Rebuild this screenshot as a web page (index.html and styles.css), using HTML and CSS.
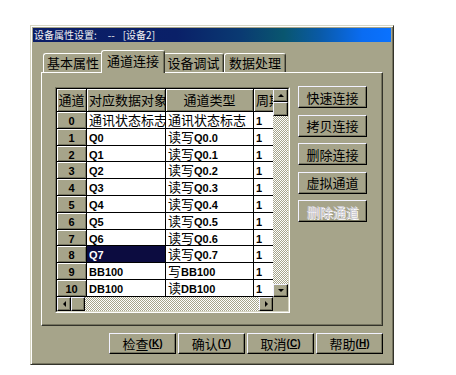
FILE: index.html
```html
<!DOCTYPE html>
<html>
<head>
<meta charset="utf-8">
<link rel="stylesheet" href="styles.css">
</head>
<body>
<div class="dialog">
  <div class="titlebar"><span>设备属性设置:</span><span class="t-dash">--</span><span class="t-dev">[设备2]</span></div>
  <div class="tabs">
    <div class="tab t1">基本属性</div>
    <div class="tab active">通道连接</div>
    <div class="tab t3">设备调试</div>
    <div class="tab t4">数据处理</div>
  </div>
  <div class="panel">
    <div class="grid">
      <div class="grid-inner">
        <div class="cells">
          <div class="c hd ctr">通道</div>
          <div class="c hd">对应数据对象</div>
          <div class="c hd ctr">通道类型</div>
          <div class="c hd">周期</div>

          <div class="c rh"><span class="en">0</span></div>
          <div class="c">通讯状态标志</div>
          <div class="c">通讯状态标志</div>
          <div class="c"><span class="en">1</span></div>

          <div class="c rh"><span class="en">1</span></div>
          <div class="c"><span class="en">Q0</span></div>
          <div class="c">读写<span class="en">Q0.0</span></div>
          <div class="c"><span class="en">1</span></div>

          <div class="c rh"><span class="en">2</span></div>
          <div class="c"><span class="en">Q1</span></div>
          <div class="c">读写<span class="en">Q0.1</span></div>
          <div class="c"><span class="en">1</span></div>

          <div class="c rh"><span class="en">3</span></div>
          <div class="c"><span class="en">Q2</span></div>
          <div class="c">读写<span class="en">Q0.2</span></div>
          <div class="c"><span class="en">1</span></div>

          <div class="c rh"><span class="en">4</span></div>
          <div class="c"><span class="en">Q3</span></div>
          <div class="c">读写<span class="en">Q0.3</span></div>
          <div class="c"><span class="en">1</span></div>

          <div class="c rh"><span class="en">5</span></div>
          <div class="c"><span class="en">Q4</span></div>
          <div class="c">读写<span class="en">Q0.4</span></div>
          <div class="c"><span class="en">1</span></div>

          <div class="c rh"><span class="en">6</span></div>
          <div class="c"><span class="en">Q5</span></div>
          <div class="c">读写<span class="en">Q0.5</span></div>
          <div class="c"><span class="en">1</span></div>

          <div class="c rh"><span class="en">7</span></div>
          <div class="c"><span class="en">Q6</span></div>
          <div class="c">读写<span class="en">Q0.6</span></div>
          <div class="c"><span class="en">1</span></div>

          <div class="c rh"><span class="en">8</span></div>
          <div class="c sel"><span class="en">Q7</span></div>
          <div class="c">读写<span class="en">Q0.7</span></div>
          <div class="c"><span class="en">1</span></div>

          <div class="c rh"><span class="en">9</span></div>
          <div class="c"><span class="en">BB100</span></div>
          <div class="c">写<span class="en">BB100</span></div>
          <div class="c"><span class="en">1</span></div>

          <div class="c rh"><span class="en">10</span></div>
          <div class="c"><span class="en">DB100</span></div>
          <div class="c">读<span class="en">DB100</span></div>
          <div class="c"><span class="en">1</span></div>
        </div>
        <div class="vscroll">
          <div class="sb-btn vbtn"><span class="arr up"></span></div>
          <div class="sb-btn vthumb"></div>
          <div class="track"></div>
          <div class="sb-btn vbtn"><span class="arr down"></span></div>
        </div>
        <div class="hscroll">
          <div class="sb-btn hbtn"><span class="arr left"></span></div>
          <div class="sb-btn hthumb"></div>
          <div class="track"></div>
          <div class="sb-btn hbtn"><span class="arr right"></span></div>
        </div>
        <div class="corner"></div>
      </div>
    </div>
    <div class="side">
      <div class="btn sbtn">快速连接</div>
      <div class="btn sbtn">拷贝连接</div>
      <div class="btn sbtn">删除连接</div>
      <div class="btn sbtn">虚拟通道</div>
      <div class="btn sbtn disabled">删除通道</div>
    </div>
  </div>
  <div class="footer">
    <div class="btn fbtn">检查<span class="en key">(<u>K</u>)</span></div>
    <div class="btn fbtn">确认<span class="en key">(<u>Y</u>)</span></div>
    <div class="btn fbtn">取消<span class="en key">(<u>C</u>)</span></div>
    <div class="btn fbtn">帮助<span class="en key">(<u>H</u>)</span></div>
  </div>
</div>
</body>
</html>
```

FILE: styles.css
```css
* { box-sizing: border-box; }

body {
  margin: 0;
  background: #fff;
  font-family: "Noto Sans CJK SC", sans-serif;
  font-size: 13px;
  color: #000;
}

.dialog {
  margin: 25px 0 0 30px;
  width: 364px;
  height: 340px;
  background: #a6a48a;
  border: 1px solid;
  border-color: #d6d5c2 #33332a #33332a #d6d5c2;
  box-shadow: inset 1px 1px #fff, inset -1px -1px #75745f;
  padding: 2px;
  display: flex;
  flex-direction: column;
}

.titlebar {
  height: 14px;
  line-height: 14px;
  font-size: 10px;
  color: #f2f2f2;
  padding-left: 1px;
  white-space: nowrap;
  background: linear-gradient(to right, #0b1d66 0%, #0a2068 40%, #0a3a72 58%, #09566f 70%, #0a5aa6 80%, #0a6cf2 92%, #0a72ff 100%);
}
.t-dash { margin-left: 11px; }
.t-dev { margin-left: 8px; }

.tabs {
  display: flex;
  align-items: flex-end;
  height: 30px;
  padding-left: 10px;
  position: relative;
  z-index: 2;
}

.tab {
  height: 19px;
  line-height: 17px;
  text-align: center;
  border: 1px solid;
  border-bottom: 0;
  border-color: #fff #33332a #33332a #fff;
  border-radius: 3px 3px 0 0;
  box-shadow: inset -1px 0 #75745f;
  background: #a6a48a;
  white-space: nowrap;
}
.t1 { width: 60px; }
.t3 { width: 61px; }
.t4 { width: 62px; }
.tab.active {
  width: 64px;
  height: 23px;
  line-height: 20px;
  margin: 0 -2px -1px;
  position: relative;
  z-index: 3;
}

.panel {
  margin-left: 8px;
  width: 342px;
  height: 254px;
  border: 1px solid;
  border-color: #fff #33332a #33332a #fff;
  box-shadow: inset -1px -1px #75745f;
  padding: 14px 0 0 13px;
  display: flex;
  align-items: flex-start;
  position: relative;
  z-index: 1;
}

.grid {
  width: 235px;
  height: 226px;
  border: 1px solid;
  border-color: #75745f #fff #fff #75745f;
}
.grid-inner {
  height: 100%;
  border: 1px solid;
  border-color: #000 #d6d5c2 #d6d5c2 #000;
  display: grid;
  grid-template-columns: 216px 15px;
  grid-template-rows: 208px 14px;
}

.cells {
  overflow: hidden;
  display: grid;
  grid-template-columns: 30px 79px 88px 40px;
  grid-template-rows: 23px repeat(11, 16.8px);
  background: #fff;
}
.c {
  border-right: 1px solid #000;
  border-bottom: 1px solid #000;
  white-space: nowrap;
  overflow: hidden;
  padding-left: 2px;
  line-height: 15.8px;
  font-size: 13px;
}
.hd {
  background: #a6a48a;
  box-shadow: inset 1px 1px #fff, inset -1px -1px #75745f;
  line-height: 22px;
}
.ctr { text-align: center; padding-left: 0; }
.rh {
  background: #a6a48a;
  box-shadow: inset 1px 1px #fff, inset -1px -1px #75745f;
  text-align: center;
  padding-left: 0;
}
.sel { background: #0c0c40; color: #fff; }

.en {
  font-family: "Liberation Sans", Arial, sans-serif;
  font-weight: bold;
  font-size: 11px;
}

.vscroll { display: flex; flex-direction: column; }
.hscroll { display: flex; }
.corner { background: #a6a48a; }

.sb-btn {
  background: #a6a48a;
  border: 1px solid;
  border-color: #f2f2ff #000 #000 #f2f2ff;
  box-shadow: inset -1px -1px #75745f;
  display: flex;
  align-items: center;
  justify-content: center;
  flex: none;
}
.vbtn { height: 13px; }
.vthumb { height: 14px; }
.hbtn { width: 14px; }
.hthumb { width: 14px; }

.track {
  flex: 1;
  background-color: #a6a48a;
  background-image: conic-gradient(#fff 25%, #a6a48a 0 50%, #fff 0 75%, #a6a48a 0);
  background-size: 2px 2px;
}

.arr { width: 0; height: 0; display: block; }
.up { border-left: 3px solid transparent; border-right: 3px solid transparent; border-bottom: 3px solid #000; }
.down { border-left: 3px solid transparent; border-right: 3px solid transparent; border-top: 3px solid #000; }
.left { border-top: 3px solid transparent; border-bottom: 3px solid transparent; border-right: 3px solid #000; }
.right { border-top: 3px solid transparent; border-bottom: 3px solid transparent; border-left: 3px solid #000; }

.btn {
  background: #a6a48a;
  border: 1px solid;
  border-color: #f2f2ff #000 #000 #f2f2ff;
  box-shadow: inset -1px -1px #75745f;
  display: flex;
  align-items: center;
  justify-content: center;
  font-size: 13px;
  line-height: 1;
  white-space: nowrap;
}

.side {
  margin-left: 8px;
  margin-top: -1px;
  display: flex;
  flex-direction: column;
  gap: 6.5px;
}
.sbtn { width: 69px; height: 22px; }
.disabled { color: #d2d1dc; text-shadow: 1px 1px #fff; }

.footer {
  display: flex;
  justify-content: flex-end;
  gap: 2px;
  margin-top: 7px;
  padding-right: 8px;
}
.fbtn { width: 67px; height: 21px; }
.key { font-size: 10px; }
.key u { text-decoration: underline; }
```
